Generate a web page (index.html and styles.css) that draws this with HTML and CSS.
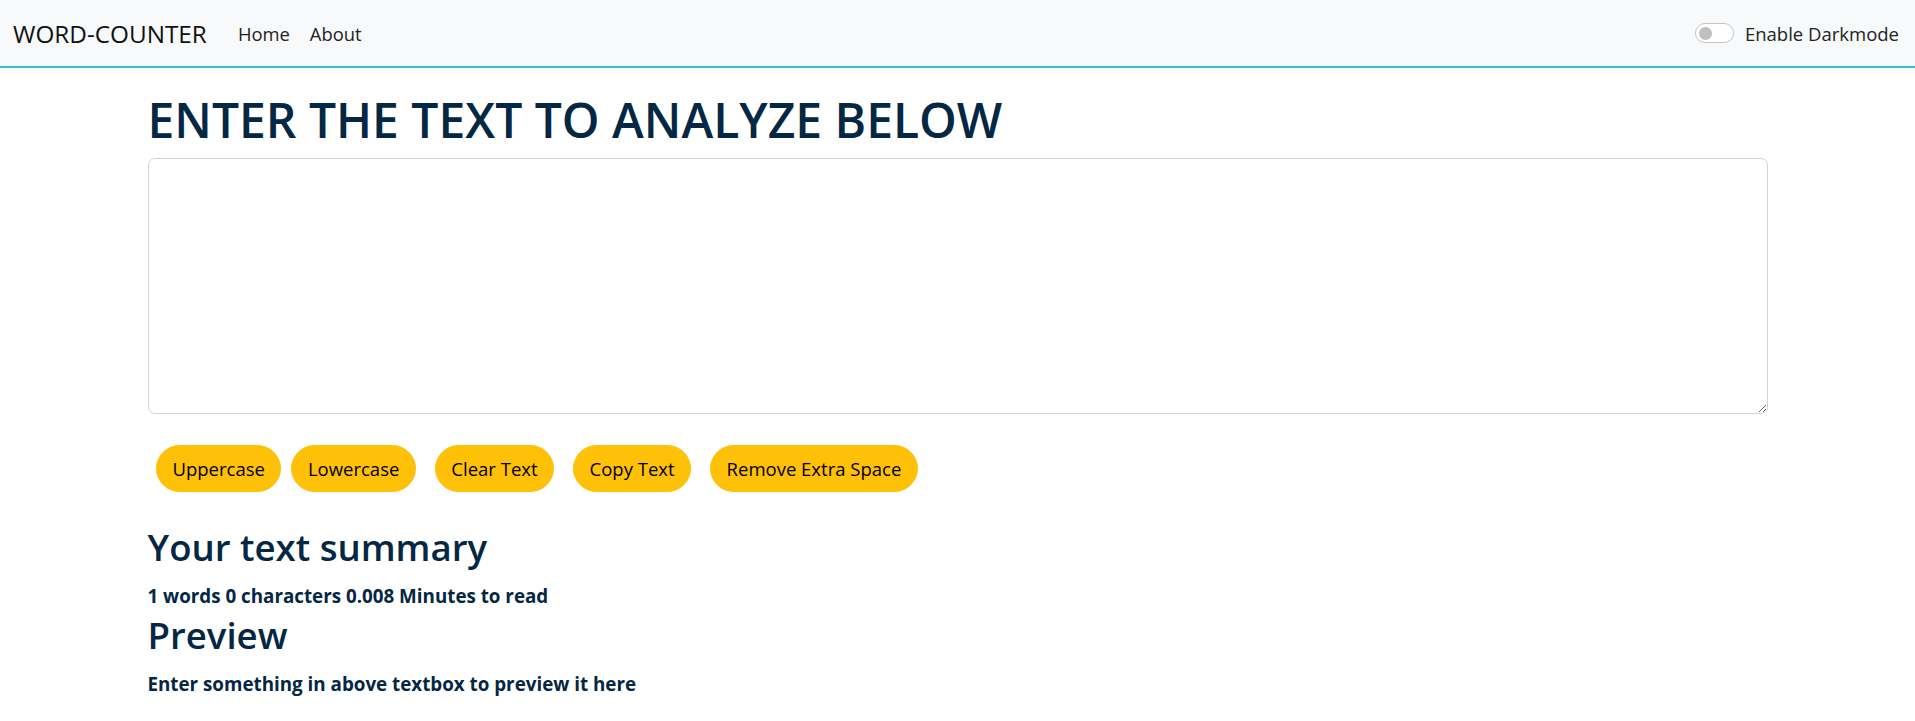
FILE: index.html
```html
<!DOCTYPE html>
<html lang="en">
<head>
<meta charset="utf-8">
<title>Word Counter</title>
<link rel="stylesheet" href="styles.css">
</head>
<body>
<nav class="navbar">
  <div class="nav-left">
    <a class="brand" href="#">WORD-COUNTER</a>
    <ul class="nav-links">
      <li><a href="#">Home</a></li>
      <li><a href="#">About</a></li>
    </ul>
  </div>
  <div class="dark-switch">
    <span class="toggle"><span class="knob"></span></span>
    <label class="switch-label">Enable Darkmode</label>
  </div>
</nav>
<main class="container">
  <h1 class="title">ENTER THE TEXT TO ANALYZE BELOW</h1>
  <textarea class="textbox"></textarea>
  <div class="actions">
    <button class="btn first">Uppercase</button>
    <button class="btn tight">Lowercase</button>
    <button class="btn">Clear Text</button>
    <button class="btn">Copy Text</button>
    <button class="btn">Remove Extra Space</button>
  </div>
  <h2 class="section">Your text summary</h2>
  <p class="stat">1 words 0 characters 0.008 Minutes to read</p>
  <h2 class="section">Preview</h2>
  <p class="stat">Enter something in above textbox to preview it here</p>
</main>
</body>
</html>
```
FILE: styles.css
```css
* { box-sizing: border-box; }
body {
  margin: 0;
  font-family: "Open Sans", "Noto Sans", sans-serif;
  color: #042743;
  background: #fff;
}
.navbar {
  display: flex;
  align-items: center;
  justify-content: space-between;
  height: 68px;
  padding: 0 16px 0 13px;
  background: #f8f9fa;
  border-bottom: 2px solid #2fbfd8;
}
.nav-left { display: flex; align-items: center; }
.brand {
  font-size: 24.3px;
  color: #111;
  text-decoration: none;
  margin-right: 21px;
}
.nav-links { display: flex; list-style: none; margin: 0; padding: 0; }
.nav-links a {
  display: block;
  padding: 0 10px;
  font-size: 18.4px;
  color: #222;
  text-decoration: none;
}
.dark-switch { display: flex; align-items: center; }
.toggle {
  display: flex;
  align-items: center;
  width: 39px;
  height: 20px;
  border: 1px solid #c4c4c4;
  border-radius: 10px;
  background: #fff;
  padding-left: 3px;
  margin-right: 11px;
}
.knob { width: 13px; height: 13px; border-radius: 50%; background: #bfbfbf; }
.switch-label { font-size: 18.5px; color: #222; }
.container {
  max-width: 1650px;
  margin: 20px auto 0;
  padding: 0 15px;
}
.title {
  margin: 0 0 8px;
  padding-top: 2px;
  font-size: 48px;
  line-height: 60px;
  font-weight: 600;
}
.textbox {
  display: block;
  width: 100%;
  height: 256px;
  border: 1px solid #ced4da;
  border-radius: 7px;
  margin: 0 0 31px;
  font: inherit;
}
.actions { display: flex; }
.btn {
  font-family: inherit;
  font-size: 18.5px;
  line-height: 29px;
  padding: 8px 15.5px;
  border: 1px solid #ffc107;
  background: #ffc107;
  color: #000;
  border-radius: 24px;
  margin-left: 19px;
}
.btn.first { margin-left: 8.5px; }
.btn.tight { margin-left: 10px; }
.section {
  margin: 31px 0 10px;
  font-size: 36.6px;
  line-height: 48px;
  font-weight: 600;
}
.section + .stat + .section { margin-top: 0; }
.stat {
  margin: 0;
  font-size: 18.8px;
  line-height: 30px;
  font-weight: 700;
}
```
